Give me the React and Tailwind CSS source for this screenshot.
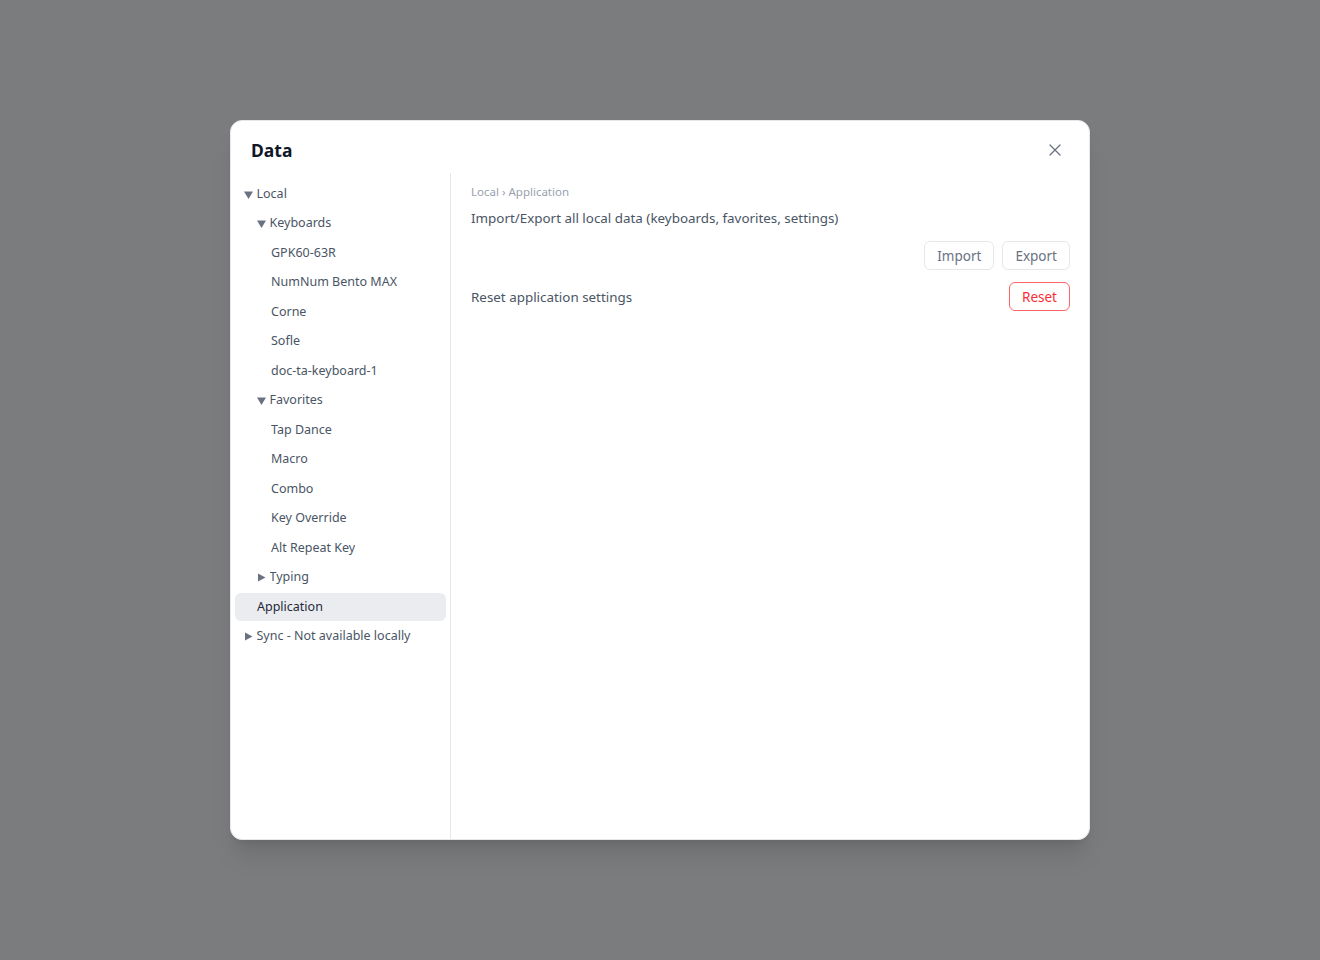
import { X } from "lucide-react";

const TREE = [
  { label: "Local", depth: 0, arrow: "down" },
  { label: "Keyboards", depth: 1, arrow: "down" },
  { label: "GPK60-63R", depth: 2 },
  { label: "NumNum Bento MAX", depth: 2 },
  { label: "Corne", depth: 2 },
  { label: "Sofle", depth: 2 },
  { label: "doc-ta-keyboard-1", depth: 2 },
  { label: "Favorites", depth: 1, arrow: "down" },
  { label: "Tap Dance", depth: 2 },
  { label: "Macro", depth: 2 },
  { label: "Combo", depth: 2 },
  { label: "Key Override", depth: 2 },
  { label: "Alt Repeat Key", depth: 2 },
  { label: "Typing", depth: 1, arrow: "right" },
  { label: "Application", depth: 1, active: true },
  { label: "Sync - Not available locally", depth: 0, arrow: "right" },
];

const INDENT = ["pl-[9px]", "pl-[22px]", "pl-[36px]"];

function Arrow({ dir }) {
  return (
    <span className="w-[12.5px] flex-shrink-0 flex items-center">
      <svg width="9" height="9" viewBox="0 0 9 9" className="text-gray-500">
        {dir === "down" ? (
          <path d="M0 1.5h9L4.5 9z" fill="currentColor" />
        ) : (
          <path d="M1 0.5v8l7.5-4z" fill="currentColor" />
        )}
      </svg>
    </span>
  );
}

function TreeRow({ item }) {
  return (
    <div
      className={`h-7 flex items-center rounded-md text-[12.5px] ${INDENT[item.depth]} ${
        item.active ? "bg-[#ebecf0] text-gray-800" : "text-gray-600"
      }`}
    >
      {item.arrow && <Arrow dir={item.arrow} />}
      <span className="truncate">{item.label}</span>
    </div>
  );
}

function Button({ children, danger }) {
  return (
    <button
      className={`h-[29px] px-3 rounded-md border bg-white text-[13.5px] ${
        danger ? "border-red-400 text-red-500" : "border-gray-200 text-gray-500"
      }`}
    >
      {children}
    </button>
  );
}

export default function App() {
  return (
    <div
      className="min-h-screen bg-[#7b7c7e] flex items-center justify-center"
      style={{ fontFamily: "'Noto Sans', 'Open Sans', sans-serif" }}
    >
      <div className="w-[860px] h-[720px] bg-white rounded-xl border border-gray-200 shadow-xl flex flex-col overflow-hidden">
        <div className="h-[52px] flex items-center justify-between pl-5 pr-[24px] pt-[6px]">
          <h2 className="text-[17.5px] font-bold text-gray-900">Data</h2>
          <X size={20} strokeWidth={1.5} className="text-gray-500" />
        </div>

        <div className="flex flex-1 min-h-0">
          <div className="w-[220px] border-r border-gray-200 px-1 pt-[7px] flex flex-col gap-[1.5px]">
            {TREE.map((item) => (
              <TreeRow key={item.label} item={item} />
            ))}
          </div>

          <div className="flex-1 pl-5 pr-[19px] pt-[10px]">
            <div className="text-[11.5px] text-gray-400">Local › Application</div>
            <p className="mt-[8px] text-[13.4px] text-gray-600">
              Import/Export all local data (keyboards, favorites, settings)
            </p>
            <div className="mt-[13px] flex justify-end gap-2">
              <Button>Import</Button>
              <Button>Export</Button>
            </div>
            <div className="mt-[12px] flex items-center justify-between">
              <span className="text-[13.4px] text-gray-600">Reset application settings</span>
              <Button danger>Reset</Button>
            </div>
          </div>
        </div>
      </div>
    </div>
  );
}
